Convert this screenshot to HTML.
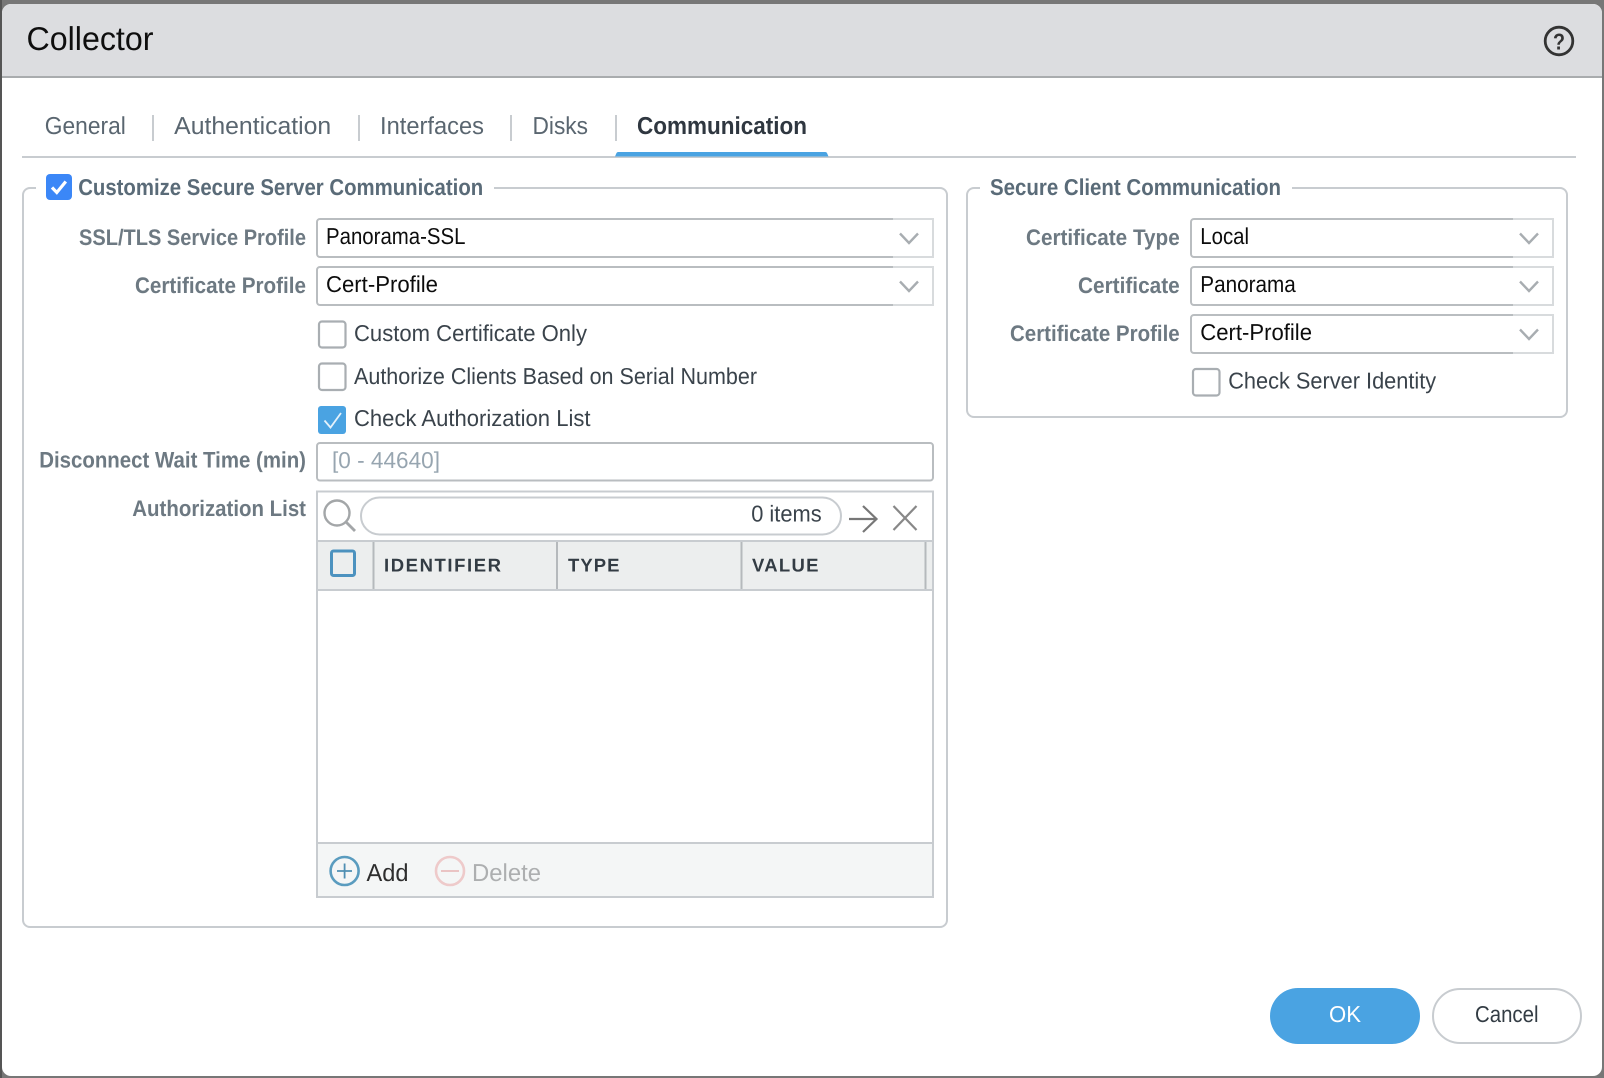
<!DOCTYPE html>
<html><head><meta charset="utf-8"><title>Collector</title>
<style>
html,body{margin:0;padding:0;background:#777;width:1604px;height:1078px;overflow:hidden}
svg{display:block;filter:blur(.35px)}
text{font-family:"Liberation Sans",Arial,sans-serif;text-rendering:geometricPrecision}
.tab{font-size:24.5px;fill:#5a6670}
.lg{font-size:23px;font-weight:700;fill:#5a6b78}
.lb{font-size:22.5px;font-weight:700;fill:#6d7982}
.v{font-size:23px;fill:#0c0c0c}
.c{font-size:23px;fill:#3a434b}
.th{font-size:18.5px;font-weight:700;fill:#333c44}
</style></head><body>
<svg width="1604" height="1078" viewBox="0 0 1604 1078" xmlns="http://www.w3.org/2000/svg">
<rect width="1604" height="1078" fill="#777"/>
<rect x="0" y="0" width="2" height="1078" fill="#555"/>
<rect x="2" y="4" width="1600" height="1072" rx="9" fill="#fff"/>
<path d="M2 76V13a9 9 0 0 1 9-9H1593a9 9 0 0 1 9 9V76Z" fill="#dcdde0"/>
<rect x="2" y="76" width="1600" height="2" fill="#a9acae"/>
<text x="26.5" y="50" font-size="33" fill="#0e0e0e" textLength="127" lengthAdjust="spacingAndGlyphs">Collector</text>
<circle cx="1559" cy="41" r="13.800" fill="none" stroke="#333" stroke-width="2.800"/>
<text x="1553" y="49.500" font-size="23" font-weight="700" fill="#333" textLength="12" lengthAdjust="spacingAndGlyphs">?</text>

<text class="tab" x="44.8" y="134" textLength="81" lengthAdjust="spacingAndGlyphs">General</text>
<text class="tab" x="174.2" y="134" textLength="157" lengthAdjust="spacingAndGlyphs">Authentication</text>
<text class="tab" x="380" y="134" textLength="104" lengthAdjust="spacingAndGlyphs">Interfaces</text>
<text class="tab" x="532.500" y="134" textLength="55.500" lengthAdjust="spacingAndGlyphs">Disks</text>
<text x="637" y="134" font-size="24.500" font-weight="700" fill="#2f3740" textLength="170" lengthAdjust="spacingAndGlyphs">Communication</text>
<g fill="#c8ccd0">
<rect x="152" y="115" width="2" height="26"/><rect x="358" y="115" width="2" height="26"/><rect x="510" y="115" width="2" height="26"/><rect x="615" y="115" width="2" height="26"/>
<rect x="22" y="156" width="1554" height="2"/>
</g>
<path d="M615 156.500l1.500-3.500a2 2 0 0 1 2-1H825a2 2 0 0 1 2 1l1.500 3.500Z" fill="#4aa3e2"/>

<g fill="none" stroke="#c8ccd0" stroke-width="2">
<path d="M36 188H30a7 7 0 0 0-7 7V920a7 7 0 0 0 7 7H940a7 7 0 0 0 7-7V195a7 7 0 0 0-7-7H494"/>
<path d="M980 188H974a7 7 0 0 0-7 7V410a7 7 0 0 0 7 7H1560a7 7 0 0 0 7-7V195a7 7 0 0 0-7-7H1292"/>
</g>
<rect x="46" y="174" width="26" height="26" rx="4" fill="#3b87f7"/>
<path d="M52 187.500l4.800 5 9-11" fill="none" stroke="#fff" stroke-width="3.200"/>
<text class="lg" x="78.200" y="195" textLength="405" lengthAdjust="spacingAndGlyphs">Customize Secure Server Communication</text>
<text class="lg" x="990" y="195" textLength="291" lengthAdjust="spacingAndGlyphs">Secure Client Communication</text>

<text class="lb" x="79" y="245" textLength="227" lengthAdjust="spacingAndGlyphs">SSL/TLS Service Profile</text>
<text class="lb" x="135" y="293" textLength="171" lengthAdjust="spacingAndGlyphs">Certificate Profile</text>

<!-- left selects -->
<g fill="none" stroke-width="2">
<path d="M893 219H933V257H893" stroke="#d8dbdd"/>
<path d="M893 219H320a3 3 0 0 0-3 3V254a3 3 0 0 0 3 3H893" stroke="#b9bdc0"/>
<path d="M900 233.500l9 9.500 9-9.500" stroke="#a8adb1" stroke-width="2.400"/>
<path d="M893 267H933V305H893" stroke="#d8dbdd"/>
<path d="M893 267H320a3 3 0 0 0-3 3V302a3 3 0 0 0 3 3H893" stroke="#b9bdc0"/>
<path d="M900 281.500l9 9.500 9-9.500" stroke="#a8adb1" stroke-width="2.400"/>
</g>
<text class="v" x="326" y="244" textLength="139.500" lengthAdjust="spacingAndGlyphs">Panorama-SSL</text>
<text class="v" x="326" y="292" textLength="112" lengthAdjust="spacingAndGlyphs">Cert-Profile</text>

<!-- left checkboxes -->
<rect x="319" y="321.500" width="26.500" height="26" rx="3" fill="#fff" stroke="#a9aeb2" stroke-width="2.200"/>
<rect x="319" y="363.500" width="26.500" height="26.500" rx="3" fill="#fff" stroke="#a9aeb2" stroke-width="2.200"/>
<rect x="318" y="406" width="28" height="28" rx="3" fill="#4aa3e2"/>
<path d="M324.500 420.500l6 7 10.500-14.500" fill="none" stroke="#fff" stroke-width="1.800" opacity=".85"/>
<text class="c" x="354" y="341" textLength="233" lengthAdjust="spacingAndGlyphs">Custom Certificate Only</text>
<text class="c" x="354" y="384" textLength="403" lengthAdjust="spacingAndGlyphs">Authorize Clients Based on Serial Number</text>
<text class="c" x="354" y="426" textLength="236.500" lengthAdjust="spacingAndGlyphs">Check Authorization List</text>

<text class="lb" x="39.200" y="467.500" textLength="266.800" lengthAdjust="spacingAndGlyphs">Disconnect Wait Time (min)</text>
<rect x="317" y="443" width="616" height="37.500" rx="3" fill="#fff" stroke="#b9bdc0" stroke-width="2"/>
<text x="332" y="468" font-size="23" fill="#97a5b0" textLength="108" lengthAdjust="spacingAndGlyphs">[0 - 44640]</text>

<text class="lb" x="132.300" y="516" textLength="173.700" lengthAdjust="spacingAndGlyphs">Authorization List</text>

<!-- table -->
<rect x="317" y="491.500" width="616" height="405.500" fill="#fff"/>
<rect x="318" y="541" width="614" height="48" fill="#eceeee"/>
<rect x="318" y="844" width="614" height="52" fill="#f4f6f6"/>
<g fill="#c8ccd0">
<rect x="318" y="540" width="614" height="2"/>
<rect x="318" y="589" width="614" height="2"/>
<rect x="318" y="842" width="614" height="2"/>
</g>
<rect x="317" y="491.500" width="616" height="405.500" fill="none" stroke="#c8ccd0" stroke-width="2"/>
<g fill="#b5b9bc">
<rect x="372.500" y="542" width="2" height="47"/><rect x="556" y="542" width="2" height="47"/><rect x="740.500" y="542" width="2" height="47"/><rect x="924.500" y="542" width="2" height="47"/>
</g>
<circle cx="337" cy="513" r="12.500" fill="none" stroke="#a3a6a8" stroke-width="2.400"/>
<path d="M346 522L355 531" stroke="#a3a6a8" stroke-width="2.800" fill="none"/>
<rect x="361" y="497.500" width="480" height="37" rx="18.500" fill="#fff" stroke="#c8ccd0" stroke-width="2"/>
<text class="c" x="751.200" y="521.500" textLength="70.500" lengthAdjust="spacingAndGlyphs">0 items</text>
<path d="M849 519H876M863 506L876.500 519L863 532" fill="none" stroke="#777" stroke-width="2.200"/>
<path d="M893.500 506L916.500 530M916.500 506L893.500 530" fill="none" stroke="#888" stroke-width="2.200"/>
<rect x="331.500" y="551" width="23" height="24.500" rx="2" fill="#eceeee" stroke="#4c92bf" stroke-width="3"/>
<text class="th" x="384" y="571.500" textLength="117" lengthAdjust="spacing">IDENTIFIER</text>
<text class="th" x="568" y="571.500" textLength="51.500" lengthAdjust="spacing">TYPE</text>
<text class="th" x="752" y="571.500" textLength="66.500" lengthAdjust="spacing">VALUE</text>

<circle cx="344.600" cy="871" r="14" fill="none" stroke="#5a9cbf" stroke-width="2.600"/>
<path d="M344.600 863.500V878.500M337 871H352" stroke="#4f8fb3" stroke-width="1.800" fill="none"/>
<text x="366.500" y="881" font-size="24.500" fill="#2e2e2e" textLength="42" lengthAdjust="spacingAndGlyphs">Add</text>
<circle cx="450" cy="871" r="14" fill="none" stroke="#eecaca" stroke-width="2.600"/>
<path d="M441 871H459" stroke="#e9bcbc" stroke-width="1.800" fill="none"/>
<text x="472" y="881" font-size="24.500" fill="#adafb0" textLength="69" lengthAdjust="spacingAndGlyphs">Delete</text>

<!-- right column -->
<text class="lb" x="1026" y="245" textLength="153.700" lengthAdjust="spacingAndGlyphs">Certificate Type</text>
<text class="lb" x="1078" y="293" textLength="101.700" lengthAdjust="spacingAndGlyphs">Certificate</text>
<text class="lb" x="1010" y="341" textLength="169.700" lengthAdjust="spacingAndGlyphs">Certificate Profile</text>

<g fill="none" stroke-width="2">
<path d="M1513 219H1553V257H1513" stroke="#d8dbdd"/>
<path d="M1513 219H1194a3 3 0 0 0-3 3V254a3 3 0 0 0 3 3H1513" stroke="#b9bdc0"/>
<path d="M1520 233.500l9 9.500 9-9.500" stroke="#a8adb1" stroke-width="2.400"/>
<path d="M1513 267H1553V305H1513" stroke="#d8dbdd"/>
<path d="M1513 267H1194a3 3 0 0 0-3 3V302a3 3 0 0 0 3 3H1513" stroke="#b9bdc0"/>
<path d="M1520 281.500l9 9.500 9-9.500" stroke="#a8adb1" stroke-width="2.400"/>
<path d="M1513 315H1553V353H1513" stroke="#d8dbdd"/>
<path d="M1513 315H1194a3 3 0 0 0-3 3V350a3 3 0 0 0 3 3H1513" stroke="#b9bdc0"/>
<path d="M1520 329.500l9 9.500 9-9.500" stroke="#a8adb1" stroke-width="2.400"/>
</g>
<text class="v" x="1200.300" y="244" textLength="48.700" lengthAdjust="spacingAndGlyphs">Local</text>
<text class="v" x="1200.300" y="292" textLength="95.500" lengthAdjust="spacingAndGlyphs">Panorama</text>
<text class="v" x="1200.300" y="340" textLength="111.700" lengthAdjust="spacingAndGlyphs">Cert-Profile</text>
<rect x="1193" y="369" width="26.500" height="26.500" rx="3" fill="#fff" stroke="#a9aeb2" stroke-width="2.200"/>
<text class="c" x="1228.200" y="388.500" textLength="208" lengthAdjust="spacingAndGlyphs">Check Server Identity</text>

<!-- buttons -->
<rect x="1270" y="988" width="150" height="56" rx="28" fill="#4aa3e2"/>
<text x="1329" y="1022" font-size="23" fill="#fff" textLength="32" lengthAdjust="spacingAndGlyphs">OK</text>
<rect x="1433" y="989" width="148" height="54" rx="27" fill="#fff" stroke="#c8ccd0" stroke-width="2"/>
<text x="1475" y="1022" font-size="23" fill="#333c44" textLength="63.500" lengthAdjust="spacingAndGlyphs">Cancel</text>
</svg>
</body></html>
